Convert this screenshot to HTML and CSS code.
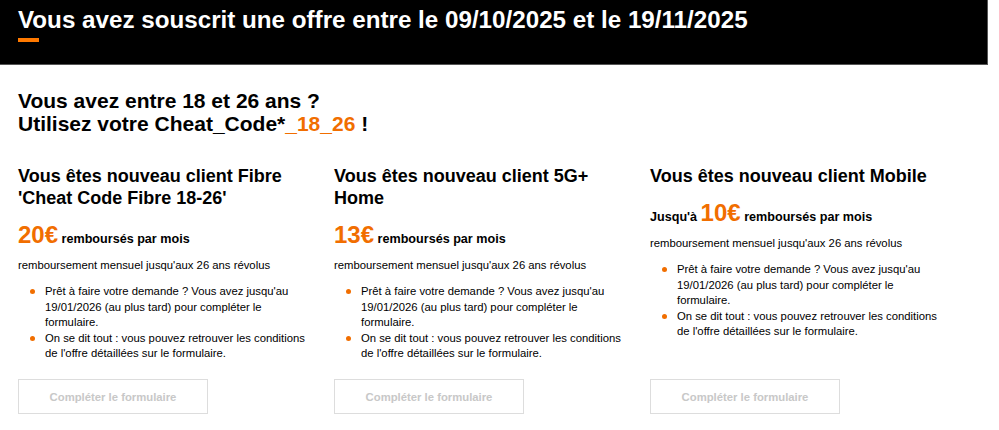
FILE: index.html
```html
<!DOCTYPE html>
<html lang="fr">
<head>
<meta charset="utf-8">
<title>Cheat Code 18-26</title>
<link rel="stylesheet" href="styles.css">
</head>
<body>
<header class="hero">
  <h1 class="hero-title">Vous avez souscrit une offre entre le 09/10/2025 et le 19/11/2025</h1>
  <span class="hero-bar"></span>
</header>
<main class="content">
  <h2 class="intro">Vous avez entre 18 et 26 ans ?<br>Utilisez votre Cheat_Code*<span class="accent">_18_26</span> !</h2>
  <div class="offers">
    <section class="offer">
      <h3 class="offer-title">Vous êtes nouveau client Fibre 'Cheat Code Fibre 18-26'</h3>
      <p class="price"><span class="amount">20€</span> remboursés par mois</p>
      <p class="desc">remboursement mensuel jusqu'aux 26 ans révolus</p>
      <ul class="points">
        <li>Prêt à faire votre demande ? Vous avez jusqu'au 19/01/2026 (au plus tard) pour compléter le formulaire.</li>
        <li>On se dit tout : vous pouvez retrouver les conditions de l'offre détaillées sur le formulaire.</li>
      </ul>
      <button class="btn" type="button">Compléter le formulaire</button>
    </section>
    <section class="offer">
      <h3 class="offer-title">Vous êtes nouveau client 5G+ Home</h3>
      <p class="price"><span class="amount">13€</span> remboursés par mois</p>
      <p class="desc">remboursement mensuel jusqu'aux 26 ans révolus</p>
      <ul class="points">
        <li>Prêt à faire votre demande ? Vous avez jusqu'au 19/01/2026 (au plus tard) pour compléter le formulaire.</li>
        <li>On se dit tout : vous pouvez retrouver les conditions de l'offre détaillées sur le formulaire.</li>
      </ul>
      <button class="btn" type="button">Compléter le formulaire</button>
    </section>
    <section class="offer">
      <h3 class="offer-title">Vous êtes nouveau client Mobile</h3>
      <p class="price">Jusqu'à <span class="amount">10€</span> remboursés par mois</p>
      <p class="desc">remboursement mensuel jusqu'aux 26 ans révolus</p>
      <ul class="points">
        <li>Prêt à faire votre demande ? Vous avez jusqu'au 19/01/2026 (au plus tard) pour compléter le formulaire.</li>
        <li>On se dit tout : vous pouvez retrouver les conditions de l'offre détaillées sur le formulaire.</li>
      </ul>
      <button class="btn" type="button">Compléter le formulaire</button>
    </section>
  </div>
</main>
</body>
</html>
```
FILE: styles.css
```css
* { box-sizing: border-box; }
html, body { margin: 0; padding: 0; background: #fff; }
body {
  font-family: "Liberation Sans", Arial, Helvetica, sans-serif;
  color: #000;
  width: 988px;
}
.hero {
  background: #000;
  height: 65px;
  border-bottom: 1px solid #555;
  border-right: 1px solid #555;
  padding: 6px 18px 0;
}
.hero-title {
  margin: 0;
  color: #fff;
  font-size: 24.2px;
  line-height: 28px;
  font-weight: 700;
}
.hero-bar {
  display: block;
  width: 21px;
  height: 4px;
  margin-top: 4px;
  background: #ff7900;
}
.content { padding: 24px 18px 0; }
.intro {
  margin: 0;
  font-size: 21px;
  line-height: 23px;
  font-weight: 700;
}
.accent { color: #f16e00; }
.offers {
  display: flex;
  gap: 16px;
  margin-top: 30px;
  min-height: 249px;
}
.offer {
  width: 300px;
  display: flex;
  flex-direction: column;
  align-items: flex-start;
}
.offer-title {
  margin: 0;
  font-size: 18px;
  line-height: 22px;
  font-weight: 700;
}
.price {
  margin: 13px 0 0;
  font-size: 12.6px;
  line-height: 26px;
  font-weight: 700;
}
.amount {
  color: #f16e00;
  font-size: 24px;
}
.desc {
  margin: 5px 0 0;
  font-size: 11.3px;
  line-height: 16px;
}
.points {
  list-style: none;
  margin: 11px 0 0;
  padding: 0 0 0 27px;
  font-size: 11.3px;
  line-height: 15.5px;
}
.points li { position: relative; }
.points li::before {
  content: "";
  position: absolute;
  left: -15px;
  top: 5px;
  width: 5px;
  height: 5px;
  border-radius: 50%;
  background: #f16e00;
}
.btn {
  margin-top: auto;
  width: 190px;
  height: 35px;
  background: #fff;
  border: 1px solid #ddd;
  color: #c8c8c8;
  font-family: "Liberation Sans", Arial, sans-serif;
  font-size: 11.3px;
  font-weight: 700;
  cursor: default;
}
```
